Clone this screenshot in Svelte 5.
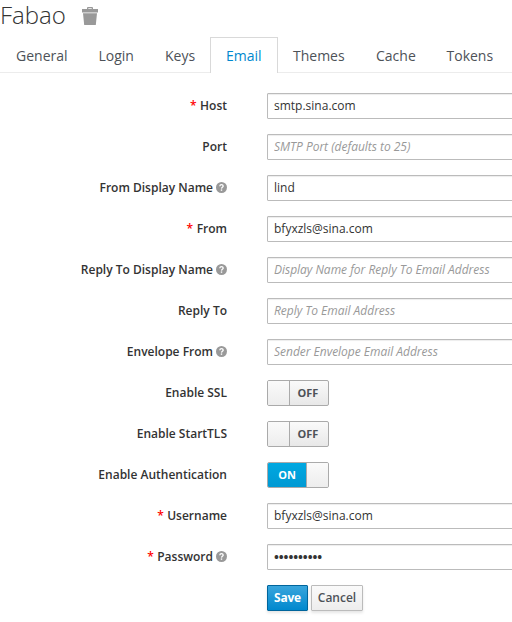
<script>
  const tabs = [
    { name: 'General', width: 82.5 },
    { name: 'Login', width: 66.5 },
    { name: 'Keys', width: 61 },
    { name: 'Email', width: 68 },
    { name: 'Themes', width: 82 },
    { name: 'Cache', width: 70.5 },
    { name: 'Tokens', width: 79 }
  ];
  const fields = [
    { id: 'host', label: 'Host', required: true, value: 'smtp.sina.com' },
    { id: 'port', label: 'Port', hint: 'SMTP Port (defaults to 25)' },
    { id: 'fromName', label: 'From Display Name', help: true, value: 'lind' },
    { id: 'from', label: 'From', required: true, value: 'bfyxzls@sina.com' },
    { id: 'replyName', label: 'Reply To Display Name', help: true, hint: 'Display Name for Reply To Email Address' },
    { id: 'reply', label: 'Reply To', hint: 'Reply To Email Address' },
    { id: 'envelope', label: 'Envelope From', help: true, hint: 'Sender Envelope Email Address' },
    { id: 'ssl', label: 'Enable SSL', toggle: true, on: false },
    { id: 'tls', label: 'Enable StartTLS', toggle: true, on: false },
    { id: 'auth', label: 'Enable Authentication', toggle: true, on: true },
    { id: 'user', label: 'Username', required: true, value: 'bfyxzls@sina.com' },
    { id: 'password', label: 'Password', required: true, help: true, value: '••••••••••' }
  ];
</script>

<main>
  <header>
    <h1>Fabao</h1>
    <svg class="trash" width="16" height="18" viewBox="0 0 16 18" aria-label="Delete">
      <path fill="#999" fill-rule="evenodd" d="M5 2V1q0-1 1-1h4q1 0 1 1v1h5v3.5H0V2zM6.3 1.3V2h3.4v-.7zM1 6.2h14L13.8 18H2.2z" />
    </svg>
  </header>

  <nav>
    {#each tabs as tab}
      <a href="#{tab.name}" class:active={tab.name === 'Email'} style:width="{tab.width}px">{tab.name}</a>
    {/each}
  </nav>

  <form>
    {#each fields as field}
      <div class="row">
        <label for={field.id}>
          {#if field.required}<span class="star">*</span>{/if}
          <span>{field.label}</span>
          {#if field.help}
            <svg class="help" width="11" height="11" viewBox="0 0 11 11">
              <circle cx="5.5" cy="5.5" r="5.5" fill="#999" />
              <path d="M3.8 4.2Q3.9 2.7 5.5 2.7T7.2 4.1Q7.2 4.8 6.4 5.3T5.5 6.6" fill="none" stroke="#fff" stroke-width="1.3" />
              <path d="M4.8 7.4h1.4v1.4H4.8z" fill="#fff" />
            </svg>
          {/if}
        </label>
        {#if field.toggle}
          <button type="button" id={field.id} class="switch" class:on={field.on}>
            {#if field.on}<span class="word">ON</span><span class="knob"></span>
            {:else}<span class="knob"></span><span class="word">OFF</span>{/if}
          </button>
        {:else}
          <input id={field.id} class:secret={field.id === 'password'} value={field.value ?? ''} placeholder={field.hint} />
        {/if}
      </div>
    {/each}
    <div class="actions">
      <button type="button" class="btn primary">Save</button>
      <button type="button" class="btn">Cancel</button>
    </div>
  </form>
</main>

<style>
  :global(body) { margin: 0; background: #fff; }
  main {
    width: 512px;
    height: 622px;
    overflow: hidden;
    font: 12px/20px 'Open Sans', sans-serif;
    color: #333;
  }
  header { display: flex; height: 37px; align-items: flex-start; }
  h1 { margin: 0; width: 82px; font-size: 24px; line-height: 30px; font-weight: 300; }
  .trash { margin-top: 7px; }
  nav { display: flex; height: 35px; border-bottom: 1px solid #ececec; }
  nav a {
    box-sizing: border-box;
    flex: none;
    height: 36px;
    padding: 6px 0 0 15px;
    border: 1px solid transparent;
    border-bottom: 0;
    font-size: 14px;
    line-height: 23px;
    color: #4d5258;
    text-decoration: none;
    white-space: nowrap;
  }
  nav a.active { color: #0088ce; background: #fff; border-color: #d9d9d9; }
  nav a.active + a { padding-left: 14px; }
  form { display: flex; flex-direction: column; gap: 15px; padding-top: 20px; }
  .row { display: flex; height: 26px; flex: none; }
  label {
    display: flex;
    justify-content: flex-end;
    width: 227px;
    margin-right: 40px;
    flex: none;
    line-height: 26px;
    font-weight: 600;
    white-space: nowrap;
  }
  .star { color: #f00; margin-right: 3.5px; }
  .help { margin: 7px 0 0 3px; }
  input {
    box-sizing: border-box;
    flex: none;
    width: 280px;
    height: 26px;
    padding: 1px 6px 3px;
    border: 1px solid #bbb;
    border-radius: 1px;
    box-shadow: inset 0 1px 1px rgba(3, 3, 3, 0.075);
    font: 12px/20px 'Open Sans', sans-serif;
    color: #333;
    outline: 0;
  }
  input.secret { padding: 2px 6px; font-size: 13px; font-weight: 700; letter-spacing: -0.08px; }
  input::placeholder { color: #999; font-style: italic; opacity: 1; letter-spacing: -0.02px; }
  button { font-family: 'Open Sans', sans-serif; }
  .switch {
    display: flex;
    box-sizing: border-box;
    width: 62px;
    height: 26px;
    padding: 0;
    border: 1px solid #aaa;
    border-radius: 2px;
    background: linear-gradient(#fafafa, #e8e8e8);
    color: #4d5258;
    font-size: 11px;
    font-weight: 700;
    line-height: 24px;
    overflow: hidden;
  }
  .knob { box-sizing: border-box; flex: none; width: 22px; height: 24px; border-right: 1px solid #aaa; background: linear-gradient(#fafafa, #ededed); }
  .word { flex: none; width: 36px; text-align: center; }
  .on .word { width: 38px; color: #fff; background: linear-gradient(#00a8e1, #0099d3); }
  .on .knob { border-right: 0; border-left: 1px solid #aaa; }
  .actions { display: flex; gap: 3px; margin-left: 267px; }
  .btn {
    box-sizing: border-box;
    width: 52px;
    height: 26px;
    padding: 0;
    border: 1px solid #bbb;
    border-radius: 1px;
    background: linear-gradient(#fafafa, #ededed);
    box-shadow: 0 2px 3px rgba(3, 3, 3, 0.1);
    font-size: 12px;
    line-height: 24px;
    font-weight: 600;
    color: #4d5258;
  }
  .primary { width: 41px; color: #fff; font-weight: 700; letter-spacing: -0.2px; border-color: #00659c; background: linear-gradient(#39a5dc, #0088ce); }
</style>
